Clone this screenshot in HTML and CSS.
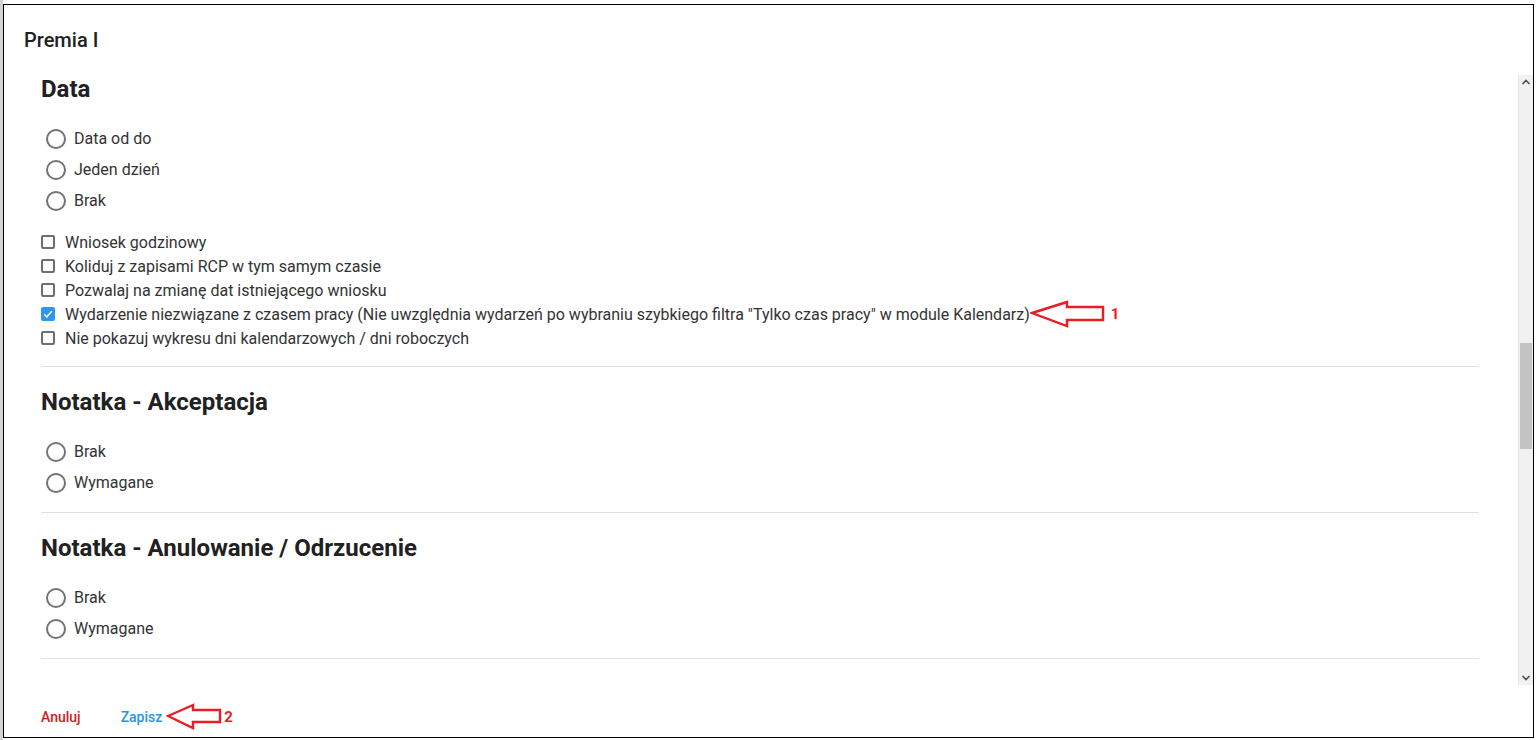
FILE: index.html
```html
<!DOCTYPE html>
<html lang="pl">
<head>
    <meta charset="UTF-8">
    <meta name="viewport" content="width=device-width, initial-scale=1.0">
    <title>Premia I</title>
    <link rel="stylesheet" href="styles.css">
</head>
<body>
    <div class="dialog">
        <h1 class="dialog-title">Premia I</h1>

        <div class="dialog-body">
            <div class="content">
                <!-- Data -->
                <section class="group first">
                    <h2>Data</h2>
                    <div class="radios">
                        <label class="radio"><span class="circle"></span>Data od do</label>
                        <label class="radio"><span class="circle"></span>Jeden dzień</label>
                        <label class="radio"><span class="circle"></span>Brak</label>
                    </div>
                    <div class="checks">
                        <label class="check"><span class="box"></span>Wniosek godzinowy</label>
                        <label class="check"><span class="box"></span>Koliduj z zapisami RCP w tym samym czasie</label>
                        <label class="check"><span class="box"></span>Pozwalaj na zmianę dat istniejącego wniosku</label>
                        <label class="check">
                            <span class="box checked">
                                <svg width="14" height="14" viewBox="0 0 14 14"><polyline points="3.2,7.2 5.8,9.8 10.8,4.2" fill="none" stroke="#fff" stroke-width="1.5"/></svg>
                            </span>Wydarzenie niezwiązane z czasem pracy (Nie uwzględnia wydarzeń po wybraniu szybkiego filtra "Tylko czas pracy" w module Kalendarz)<svg class="arrow arrow-1" width="76" height="28" viewBox="0 0 76 28"><polygon points="2,13 37,2 37,7 73,7 73,20 37,20 37,26" fill="none" stroke="#ec1c24" stroke-width="2.4" stroke-linejoin="miter"/></svg><span class="mark">1</span>
                        </label>
                        <label class="check"><span class="box"></span>Nie pokazuj wykresu dni kalendarzowych / dni roboczych</label>
                    </div>
                </section>

                <!-- Notatka - Akceptacja -->
                <section class="group">
                    <h2>Notatka - Akceptacja</h2>
                    <div class="radios">
                        <label class="radio"><span class="circle"></span>Brak</label>
                        <label class="radio"><span class="circle"></span>Wymagane</label>
                    </div>
                </section>

                <!-- Notatka - Anulowanie / Odrzucenie -->
                <section class="group">
                    <h2>Notatka - Anulowanie / Odrzucenie</h2>
                    <div class="radios">
                        <label class="radio"><span class="circle"></span>Brak</label>
                        <label class="radio"><span class="circle"></span>Wymagane</label>
                    </div>
                </section>

                <!-- next section, scrolled out of view -->
                <section class="group last">
                    <h2>Widoczność wniosku</h2>
                </section>
            </div>

            <div class="scrollbar">
                <div class="sb-btn">
                    <svg width="14" height="15" viewBox="0 0 14 15"><polyline points="3.5,9 7,5.5 10.5,9" fill="none" stroke="#505050" stroke-width="1.6"/></svg>
                </div>
                <div class="sb-track"><div class="sb-thumb"></div></div>
                <div class="sb-btn">
                    <svg width="14" height="15" viewBox="0 0 14 15"><polyline points="3.5,6 7,9.5 10.5,6" fill="none" stroke="#505050" stroke-width="1.6"/></svg>
                </div>
            </div>
        </div>

        <div class="dialog-actions">
            <button class="btn btn-cancel">Anuluj</button>
            <button class="btn btn-save">Zapisz</button>
            <svg class="arrow arrow-2" width="56" height="27" viewBox="0 0 56 27"><polygon points="2,13 27,2 27,7 54,7 54,19 27,19 27,25" fill="none" stroke="#ec1c24" stroke-width="2.4"/></svg>
            <span class="mark">2</span>
        </div>
    </div>
</body>
</html>
```

FILE: styles.css
```css
html, body {
    height: 100%;
}
body {
    margin: 0;
    font-family: Roboto, 'Liberation Sans', sans-serif;
    color: #333;
    background: linear-gradient(90deg, #d4d4d4 0, #d4d4d4 3px, #fff 3px);
    overflow: hidden;
}
.dialog {
    box-sizing: border-box;
    width: 1531px;
    height: 734px;
    margin: 4px 0 0 3px;
    border: 1px solid #000;
    background: #fff;
    display: flex;
    flex-direction: column;
}
.dialog-title {
    margin: 0;
    padding: 23px 20px 23px 20px;
    font-size: 20px;
    line-height: 24px;
    font-weight: 500;
    color: #212121;
}
.dialog-body {
    display: flex;
    height: 610px;
    flex: none;
}
.content {
    flex: 1;
    overflow: hidden;
    padding: 0 39px 0 37px;
}
.group {
    border-top: 1px solid #e0e0e0;
    padding: 21px 0 14px;
}
.group.first {
    border-top: none;
    padding-top: 0;
    padding-bottom: 16px;
}
.group.last {
    padding-top: 27px;
}
.group h2 {
    margin: 0;
    font-size: 24px;
    line-height: 28px;
    font-weight: 700;
    color: #212121;
}
.radios {
    margin-top: 20px;
    display: flex;
    flex-direction: column;
}
.radio {
    display: flex;
    align-items: center;
    height: 31px;
    font-size: 16px;
    color: #333;
}
.circle {
    box-sizing: border-box;
    width: 20px;
    height: 20px;
    margin: 0 8px 0 5px;
    border: 2px solid #737373;
    border-radius: 50%;
}
.checks {
    margin-top: 14px;
    display: flex;
    flex-direction: column;
}
.check {
    display: flex;
    align-items: center;
    height: 24px;
    font-size: 16px;
    color: #333;
    white-space: nowrap;
}
.box {
    box-sizing: border-box;
    width: 14px;
    height: 14px;
    margin-right: 10px;
    border: 2px solid #6e6e6e;
    border-radius: 2px;
    display: flex;
    align-items: center;
    justify-content: center;
}
.box.checked {
    border: none;
    background: #2f95f2;
}
.arrow {
    flex: none;
}
.mark {
    color: #ec1c24;
    font-weight: 700;
    font-size: 15px;
    margin-left: 5px;
}
.scrollbar {
    width: 14px;
    display: flex;
    flex-direction: column;
    background: #f1f1f1;
    border-left: 1px solid #e6e6e6;
}
.sb-btn {
    height: 15px;
    display: flex;
    justify-content: center;
}
.sb-track {
    flex: 1;
}
.sb-thumb {
    margin: 253px 1px 0 1px;
    height: 106px;
    background: #c4c4c4;
}
.dialog-actions {
    display: flex;
    align-items: center;
    height: 27px;
    padding: 18px 0 0 37px;
}
.btn {
    border: none;
    background: none;
    padding: 0;
    font-family: Roboto, 'Liberation Sans', sans-serif;
    font-size: 14px;
    font-weight: 500;
    line-height: 20px;
    cursor: pointer;
}
.btn-cancel {
    color: #d51a1a;
    margin-right: 40px;
}
.btn-save {
    color: #2196f3;
}
.arrow-2 {
    margin-left: 4px;
}
.dialog-actions .mark {
    margin-left: 2px;
}
```
